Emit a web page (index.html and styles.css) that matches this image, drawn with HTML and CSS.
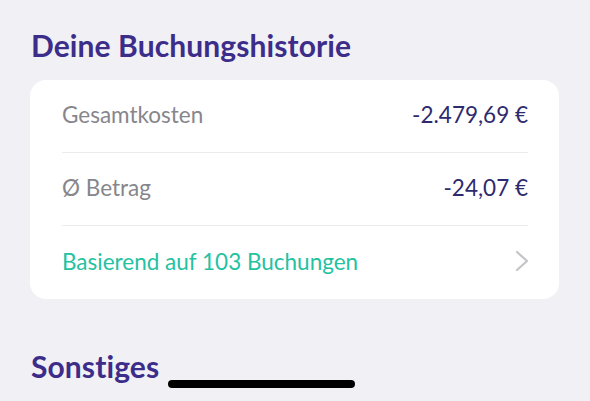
FILE: index.html
```html
<!DOCTYPE html>
<html lang="de">
<head>
<meta charset="utf-8">
<link rel="stylesheet" href="styles.css">
</head>
<body>
<main class="page">
  <h2 class="section-title">Deine Buchungshistorie</h2>
  <section class="card">
    <div class="row">
      <span class="label">Gesamtkosten</span>
      <span class="value">-2.479,69 €</span>
    </div>
    <div class="row">
      <span class="label">Ø Betrag</span>
      <span class="value">-24,07 €</span>
    </div>
    <div class="row link-row">
      <span class="link">Basierend auf 103 Buchungen</span>
      <svg class="chevron" width="14" height="22" viewBox="0 0 14 22"><path d="M2 2 L12 11 L2 20" fill="none" stroke="#c4c4c8" stroke-width="2.2" stroke-linecap="round" stroke-linejoin="round"/></svg>
    </div>
  </section>
  <h2 class="section-title second">Sonstiges</h2>
  <section class="card stub"></section>
</main>
<div class="home-indicator"></div>
</body>
</html>
```
FILE: styles.css
```css
html, body {
  margin: 0;
  padding: 0;
  background: #f1f0f5;
  height: 401px;
  overflow: hidden;
}
body {
  font-family: "Lato", "Noto Sans", sans-serif;
  position: relative;
}
.page {
  padding: 28px 31px 0 30px;
}
.section-title {
  margin: 0 0 0 1px;
  font-size: 30px;
  line-height: 34px;
  font-weight: 700;
  color: #3b2d89;
  letter-spacing: 0.1px;
}
.section-title.second {
  margin-top: 50px;
}
.card {
  background: #ffffff;
  border-radius: 16px;
  margin-top: 18px;
  padding: 0 31px 0 32px;
}
.card.stub {
  margin-top: 20px;
  height: 40px;
}
.row {
  height: 73px;
  box-sizing: border-box;
  padding-bottom: 3px;
  display: flex;
  align-items: center;
  justify-content: space-between;
  border-bottom: 1px solid #ececef;
  font-size: 22.5px;
}
.row:last-child {
  border-bottom: none;
}
.label {
  color: #86868b;
}
.value {
  color: #2e2a6e;
}
.link {
  color: #24c2a1;
}
.chevron {
  margin-right: -1px;
}
.home-indicator {
  position: absolute;
  left: 168px;
  top: 380px;
  width: 187px;
  height: 8px;
  border-radius: 4px;
  background: #000;
}
```
